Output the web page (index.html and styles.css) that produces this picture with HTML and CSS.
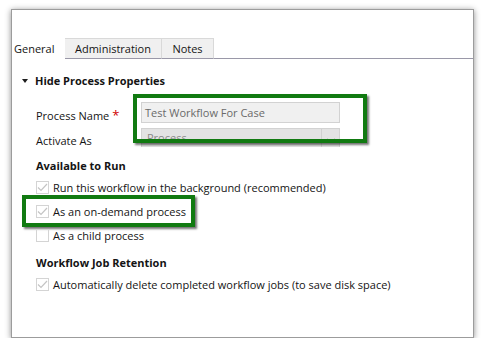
FILE: index.html
```html
<!DOCTYPE html>
<html>
<head>
<meta charset="utf-8">
<link rel="stylesheet" href="styles.css">
</head>
<body>
<div class="frame">
  <div class="tabs">
    <div class="tab active">General</div>
    <div class="tab tab-admin">Administration</div>
    <div class="tab tab-notes">Notes</div>
    <div class="tab-fill"></div>
  </div>
  <div class="content">
    <div class="section-head"><span class="caret"></span>Hide Process Properties</div>
    <div class="fields">
      <div class="field">
        <div class="label">Process Name <span class="req">*</span></div>
        <div class="input">Test Workflow For Case</div>
      </div>
      <div class="field field-select">
        <div class="label">Activate As</div>
        <div class="select"><span class="sel-text">Process</span><span class="sel-btn"><svg width="8" height="5" viewBox="0 0 8 5"><path d="M0.5 0.5 L4 4 L7.5 0.5" fill="none" stroke="#b8b8b8" stroke-width="1"/></svg></span></div>
      </div>
      <div class="highlight hl-fields"></div>
    </div>
    <div class="group-title">Available to Run</div>
    <div class="check-row"><span class="cb checked"><svg width="11" height="9" viewBox="0 0 11 9"><path d="M1 4.5 L4 7.5 L10 1" fill="none" stroke="#c4c4c4" stroke-width="1.2"/></svg></span>Run this workflow in the background (recommended)</div>
    <div class="check-row"><span class="cb checked"><svg width="11" height="9" viewBox="0 0 11 9"><path d="M1 4.5 L4 7.5 L10 1" fill="none" stroke="#c4c4c4" stroke-width="1.2"/></svg></span>As an on-demand process<div class="highlight hl-check"></div></div>
    <div class="check-row"><span class="cb"></span>As a child process</div>
    <div class="group-title retention">Workflow Job Retention</div>
    <div class="check-row"><span class="cb checked"><svg width="11" height="9" viewBox="0 0 11 9"><path d="M1 4.5 L4 7.5 L10 1" fill="none" stroke="#c4c4c4" stroke-width="1.2"/></svg></span>Automatically delete completed workflow jobs (to save disk space)</div>
  </div>
</div>
</body>
</html>
```
FILE: styles.css
```css
html, body {
  margin: 0;
  padding: 0;
  background: #ffffff;
}
body {
  font-family: "Open Sans", "Noto Sans", sans-serif;
  font-size: 11px;
  color: #141414;
}
.frame {
  position: relative;
  margin: 9px 0 0 11px;
  width: 463px;
  height: 329px;
  border: 1px solid #9c9c9c;
  background: #fff;
  box-shadow: 0 1px 6px rgba(0, 0, 0, 0.45);
  padding-top: 28px;
  box-sizing: border-box;
}
.tabs {
  display: flex;
  height: 21px;
}
.tab {
  box-sizing: border-box;
  height: 21px;
  display: flex;
  align-items: center;
  justify-content: center;
  background: #f0f0f0;
  border: 1px solid #d9d9d9;
  border-bottom: 1px solid #9a98a8;
  border-left: none;
  color: #141414;
}
.tab.active {
  background: #fff;
  border: none;
  justify-content: flex-start;
  padding: 0 0 0 2px;
  width: 53px;
}
.tab-admin {
  width: 97px;
}
.tab-notes {
  width: 52px;
}
.tab-fill {
  flex: 1;
  border-bottom: 1px solid #9a98a8;
}
.content {
  padding: 11px 0 0 24px;
}
.section-head {
  font-weight: bold;
  display: flex;
  align-items: center;
  margin-left: -14px;
  height: 20px;
}
.caret {
  width: 0;
  height: 0;
  border-left: 3.5px solid transparent;
  border-right: 3.5px solid transparent;
  border-top: 4px solid #1e1e1e;
  margin: 2px 7px 0 0;
}
.fields {
  position: relative;
  margin-top: 12px;
  width: 304px;
}
.field {
  display: flex;
  align-items: center;
  height: 21px;
}
.field .label {
  padding-top: 4px;
}
.field-select {
  margin-top: 5px;
  align-items: flex-start;
  height: 19px;
}
.label {
  width: 105px;
  flex: none;
}
.field-select .label {
  padding-top: 5px;
}
.req {
  color: #d00000;
  font-size: 13px;
}
.input {
  box-sizing: border-box;
  width: 200px;
  height: 21px;
  background: #f0f0f0;
  border: 1px solid #d2d2d2;
  color: #6a6a6a;
  padding-left: 3px;
  display: flex;
  align-items: center;
}
.select {
  box-sizing: border-box;
  width: 200px;
  height: 19px;
  background: #e3e3e3;
  border: 1px solid #d2d2d2;
  border-bottom: none;
  display: flex;
  justify-content: space-between;
  color: #8a8a8a;
  overflow: hidden;
}
.sel-text {
  padding: 1px 0 0 5px;
}
.sel-btn {
  width: 18px;
  border-left: 1px solid #d0d0d0;
  display: flex;
  justify-content: center;
  padding-top: 9px;
  box-sizing: border-box;
}
.highlight {
  position: absolute;
  border: 4px solid #117a11;
  box-shadow: 2px 2px 2px rgba(0, 0, 0, 0.55);
  pointer-events: none;
}
.hl-fields {
  left: 97px;
  top: -8px;
  width: 226px;
  height: 41px;
}
.group-title {
  font-weight: bold;
  margin-top: 9px;
  height: 19px;
  display: flex;
  align-items: center;
}
.check-row {
  display: flex;
  align-items: center;
  height: 24px;
  position: relative;
}
.cb {
  box-sizing: border-box;
  width: 13px;
  height: 13px;
  border: 1px solid #d4d4d4;
  margin-right: 4px;
  display: flex;
  align-items: center;
  justify-content: center;
  flex: none;
}
.hl-check {
  left: -14px;
  top: -4px;
  width: 165px;
  height: 24px;
}
.retention {
  margin-top: 6px;
}
```
